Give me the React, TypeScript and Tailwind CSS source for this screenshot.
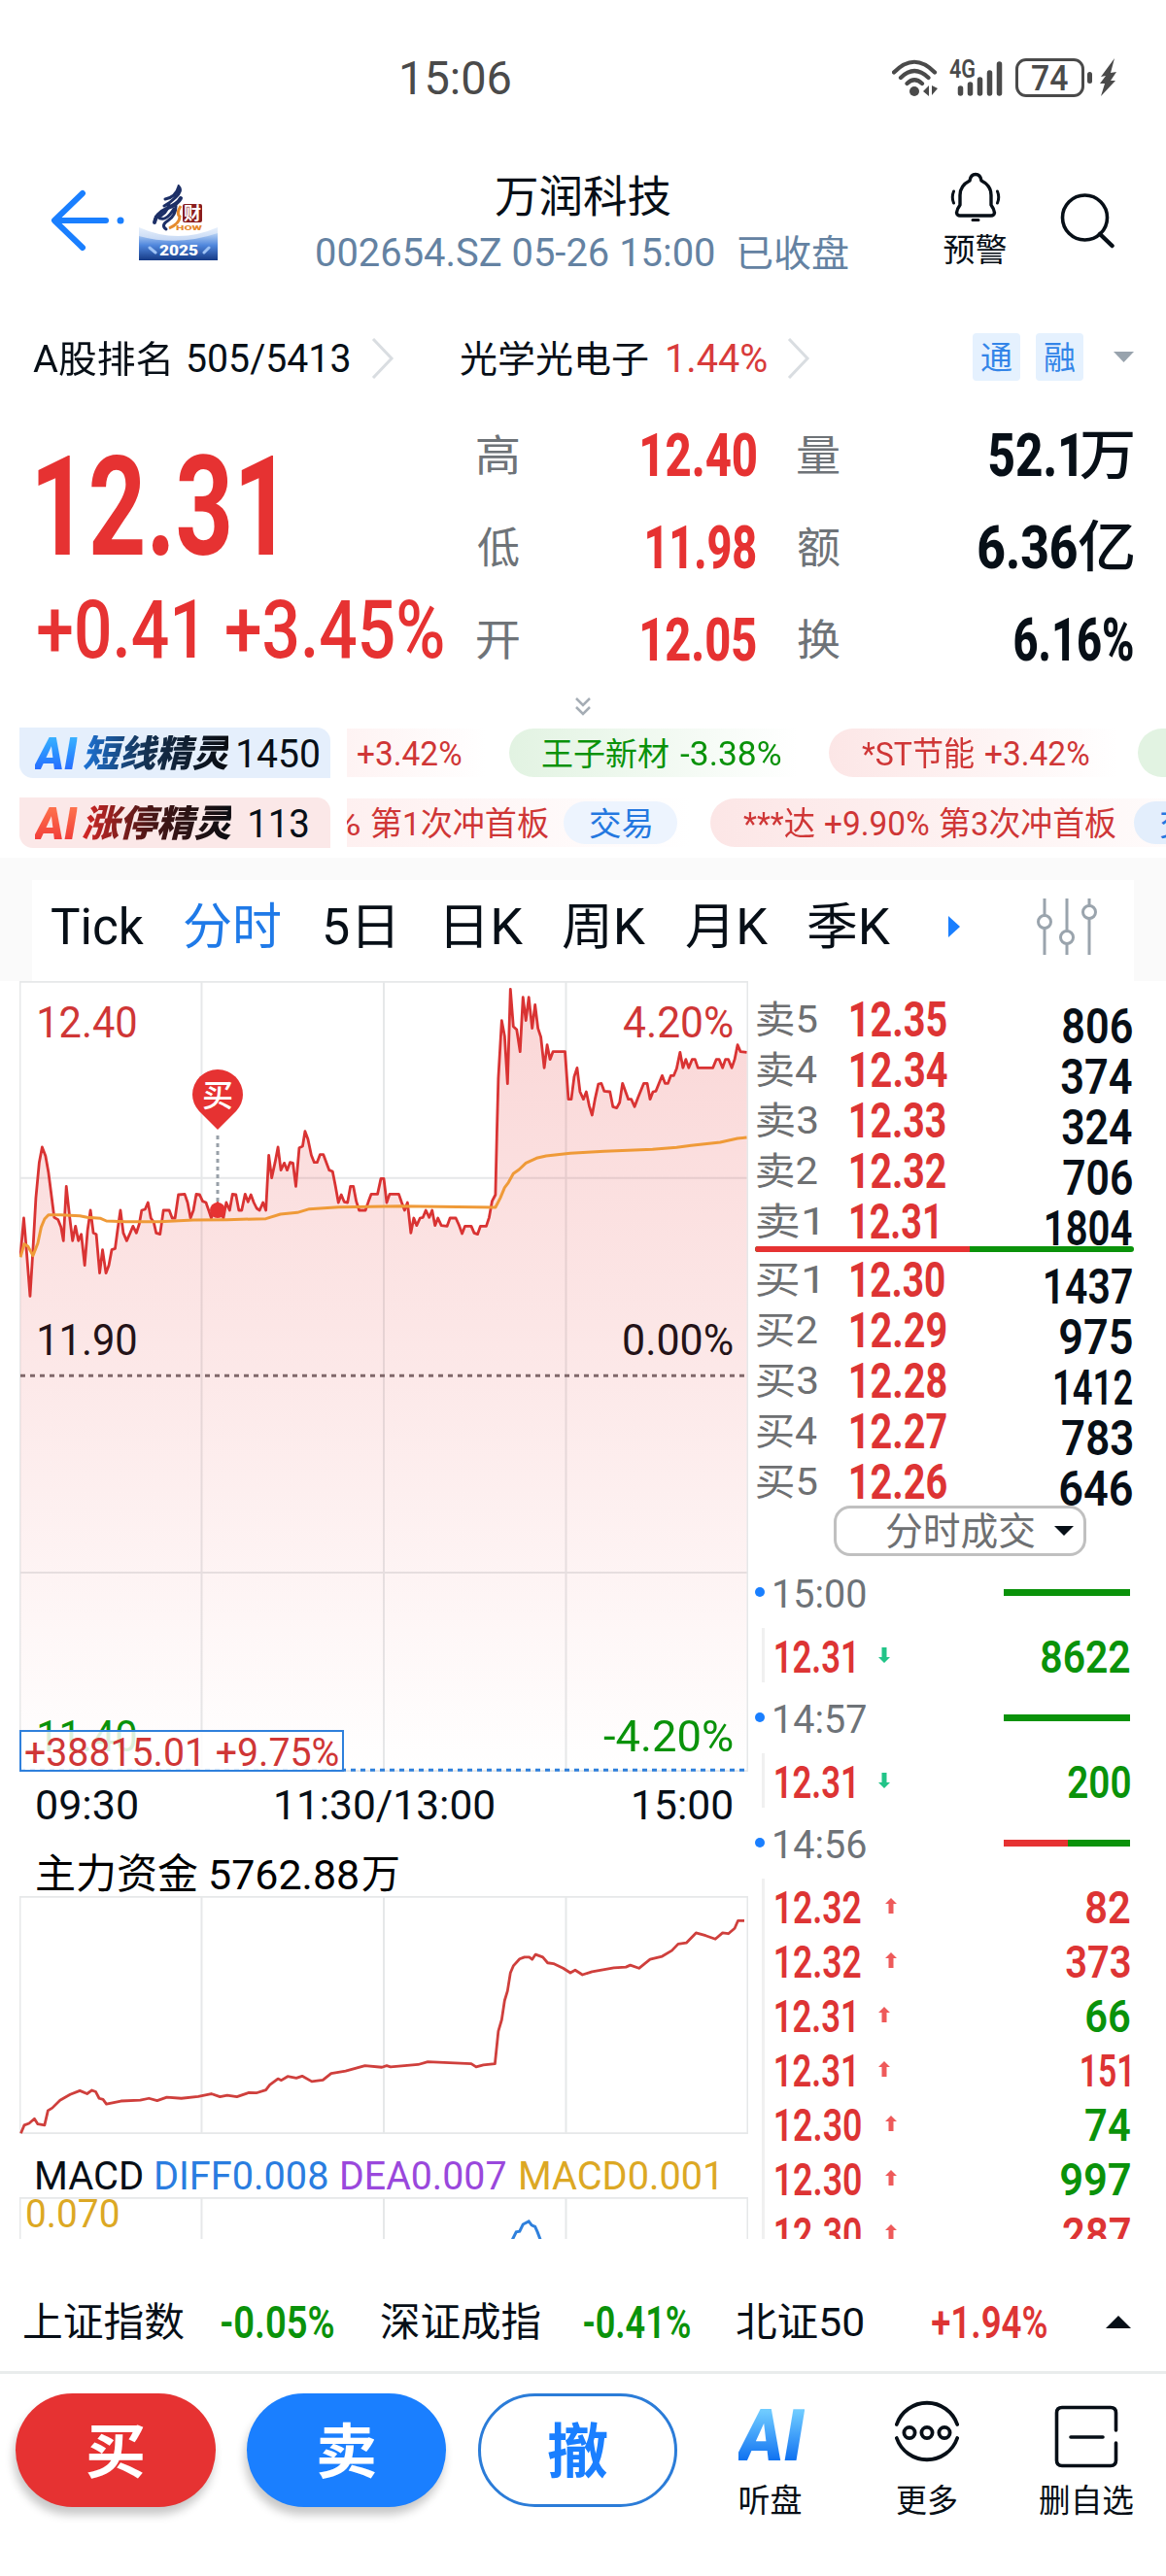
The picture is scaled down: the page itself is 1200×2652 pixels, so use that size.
import { useLayoutEffect, useRef, type ReactNode } from 'react';
import { clsx } from 'clsx';

interface FitProps {
  children: string;
  className?: string;
  inner?: string;
}

// Squeezes or stretches one line of text so its ink fills the width given in className.
function Fit({ children, className, inner }: FitProps) {
  const box = useRef<HTMLSpanElement>(null);
  const text = useRef<HTMLSpanElement>(null);

  useLayoutEffect(() => {
    if (!box.current || !text.current) return;
    const ctx = document.createElement('canvas').getContext('2d');
    if (!ctx) return;
    const cs = getComputedStyle(text.current);
    ctx.font = `${cs.fontStyle} ${cs.fontWeight} ${cs.fontSize} ${cs.fontFamily}`;
    const m = ctx.measureText(children);
    const ink = m.actualBoundingBoxLeft + m.actualBoundingBoxRight;
    const s = box.current.clientWidth / ink;
    text.current.style.transform = `scaleX(${s}) translateX(${m.actualBoundingBoxLeft}px)`;
  }, [children]);

  return (
    <span ref={box} className={clsx('block shrink-0 translate-y-px whitespace-pre leading-none', className)}>
      <span ref={text} className={clsx('inline-block origin-left', inner)}>
        {children}
      </span>
    </span>
  );
}

const PRICE =
  '42,880 49,762 54,850 62,1003 68,860 74,700 81,590 87,543 94,570 100,620 106,690 112,760 120,767 126,790 131,832 137,664 144,760 150,832 156,787 162,832 168,812 175,908 181,800 187,738 193,808 199,812 206,932 212,860 219,932 225,908 231,860 238,856 243,800 249,738 255,808 262,832 268,812 275,787 282,808 288,780 293,738 300,735 306,714 312,762 318,775 323,808 331,812 338,738 350,738 356,762 362,762 369,690 382,688 388,714 394,762 400,738 406,688 413,690 419,710 426,714 432,740 437,762 450,715 462,762 468,714 475,738 481,688 488,690 494,738 500,738 507,688 513,712 519,690 525,714 531,732 537,738 544,714 550,738 556,568 562,638 569,590 575,543 581,614 588,592 594,614 600,590 606,592 612,664 619,545 626,540 631,494 637,518 644,568 650,590 656,590 662,566 669,566 675,590 681,614 688,618 694,664 700,714 706,690 712,712 719,714 725,664 731,664 737,710 743,738 756,738 762,712 768,688 781,688 788,640 794,640 800,714 806,688 825,688 831,714 837,738 843,714 850,808 856,762 862,785 869,762 875,760 881,738 888,760 894,738 900,785 906,762 913,785 925,787 931,762 943,762 950,785 956,810 962,787 975,787 981,808 988,812 994,787 1006,787 1012,760 1018,710 1025,690 1028,500 1031,330 1038,152 1044,200 1050,347 1056,55 1062,170 1069,180 1076,248 1082,80 1088,152 1094,80 1101,176 1107,103 1113,176 1119,203 1126,298 1132,227 1138,272 1144,248 1169,248 1176,395 1182,395 1188,325 1194,298 1200,372 1207,395 1213,372 1219,415 1225,444 1231,395 1238,348 1244,346 1250,370 1262,372 1268,418 1276,422 1282,405 1288,346 1300,395 1306,395 1313,418 1320,390 1332,346 1339,346 1345,395 1351,372 1357,370 1370,322 1376,346 1382,346 1388,322 1394,322 1400,300 1407,250 1413,298 1419,272 1425,298 1432,272 1438,272 1444,298 1475,298 1482,272 1488,272 1495,298 1501,272 1507,272 1514,298 1520,272 1526,227 1532,248 1545,250';

const AVG =
  '42,883 50,842 58,850 68,878 78,840 85,790 92,765 100,752 125,752 165,755 180,760 208,763 220,771 260,773 330,773 400,768 470,767 550,764 580,750 615,745 640,734 700,728 830,725 1025,729 1035,700 1044,668 1052,652 1062,625 1074,612 1088,592 1110,577 1130,570 1180,562 1250,556 1350,550 1400,544 1430,538 1490,528 1526,516 1545,513';

const FLOW =
  '43,1256 50,1235 60,1230 71,1218 78,1232 92,1235 99,1197 108,1190 124,1170 145,1155 165,1145 180,1153 190,1144 198,1148 205,1165 213,1168 220,1180 250,1172 290,1170 308,1165 325,1171 345,1162 375,1165 410,1160 437,1153 455,1161 470,1157 490,1161 515,1150 530,1151 550,1143 558,1130 575,1114 582,1118 595,1108 613,1112 625,1107 645,1121 668,1117 685,1100 715,1094 755,1080 790,1084 800,1080 808,1083 865,1077 885,1070 975,1075 985,1083 1000,1078 1024,1075 1031,990 1038,960 1044,910 1050,885 1056,838 1062,820 1075,802 1085,797 1095,797 1101,803 1108,790 1123,797 1133,812 1145,814 1165,826 1180,838 1190,831 1205,843 1225,835 1270,825 1295,823 1304,818 1322,826 1345,803 1370,795 1390,780 1403,763 1420,760 1440,734 1460,741 1480,750 1495,734 1507,736 1520,722 1527,702 1540,702';

const SELLS = [
  { label: '卖5', price: '12.35', pw: 'w-[98px]', vol: '806', vw: 'w-[71px]' },
  { label: '卖4', price: '12.34', pw: 'w-[99px]', vol: '374', vw: 'w-[73px]' },
  { label: '卖3', price: '12.33', pw: 'w-[97px]', vol: '324', vw: 'w-[72px]' },
  { label: '卖2', price: '12.32', pw: 'w-[97px]', vol: '706', vw: 'w-[71px]' },
  { label: '卖1', price: '12.31', pw: 'w-[88px]', vol: '1804', vw: 'w-[88px]' },
];

const BUYS = [
  { label: '买1', price: '12.30', pw: 'w-[96px]', vol: '1437', vw: 'w-[89px]' },
  { label: '买2', price: '12.29', pw: 'w-[98px]', vol: '975', vw: 'w-[74px]' },
  { label: '买3', price: '12.28', pw: 'w-[98px]', vol: '1412', vw: 'w-[79px]' },
  { label: '买4', price: '12.27', pw: 'w-[98px]', vol: '783', vw: 'w-[72px]' },
  { label: '买5', price: '12.26', pw: 'w-[98px]', vol: '646', vw: 'w-[74px]' },
];

const TRADES = [
  { time: '15:00', red: 'w-0', rows: [{ price: '12.31', up: false, vol: '8622', vw: 'w-[91px]', buy: false }] },
  { time: '14:57', red: 'w-0', rows: [{ price: '12.31', up: false, vol: '200', vw: 'w-[64px]', buy: false }] },
  {
    time: '14:56',
    red: 'w-[66px]',
    rows: [
      { price: '12.32', up: true, vol: '82', vw: 'w-[45px]', buy: true },
      { price: '12.32', up: true, vol: '373', vw: 'w-[66px]', buy: true },
      { price: '12.31', up: true, vol: '66', vw: 'w-[45px]', buy: false },
      { price: '12.31', up: true, vol: '151', vw: 'w-[50px]', buy: true },
      { price: '12.30', up: true, vol: '74', vw: 'w-[46px]', buy: false },
      { price: '12.30', up: true, vol: '997', vw: 'w-[71px]', buy: false },
      { price: '12.30', up: true, vol: '287', vw: 'w-[69px]', buy: true },
    ],
  },
];

function StatusBar() {
  return (
    <div className="flex h-[160px] items-center text-[#4a4a4a]">
      <Fit className="ml-[414px] w-[111px] text-[48px]">15:06</Fit>
      <svg className="ml-[393px] h-[40px] w-[47px]" viewBox="0 0 47 40" fill="none" stroke="#4a4a4a" strokeWidth="4.2" strokeLinecap="round">
        <path d="M2 14.500Q23 -7 44 14.500M9 20Q23 6 37.500 20M15.500 26Q23 18.500 31 26" />
        <circle cx="23" cy="34" r="5" fill="#4a4a4a" stroke="none" />
        <path d="M38 28v11l-6-5zM41 28v10l6-7z" fill="#4a4a4a" stroke="none" />
      </svg>
      <svg className="ml-[12px] h-[40px] w-[56px]" viewBox="0 0 56 40" fill="none" stroke="#4a4a4a" strokeWidth="5.500" strokeLinecap="round">
        <path d="M11.500 36v-5M21.500 36v-9M31.500 36v-14M41.500 36v-21M51.500 36v-30" />
        <text x="0" y="19.500" fill="#4a4a4a" stroke="none" fontSize="25" fontWeight="600" textLength="27" lengthAdjust="spacingAndGlyphs">4G</text>
      </svg>
      <div className="ml-[12px] flex h-[40px] w-[71px] items-center justify-center rounded-[11px] border-[3px] border-[#4a4a4a]">
        <Fit className="w-[37px] text-[36px] font-medium">74</Fit>
      </div>
      <div className="ml-[3px] h-[12px] w-[5px] rounded-full bg-[#4a4a4a]" />
      <svg className="ml-[8px] h-[40px] w-[17px]" viewBox="0 0 17 40">
        <path d="M15 0L1 19L6 18L0 26L5 26L1 39L16 23L11 23L17 14L11 15Z" fill="#4a4a4a" />
      </svg>
    </div>
  );
}

function Logo() {
  return (
    <svg className="h-[78px] w-[81px]" viewBox="0 0 81 78">
      <defs>
        <linearGradient id="sea" x1="0" y1="0" x2="0" y2="1">
          <stop offset="0" stopColor="#b8d3f5" />
          <stop offset="0.450" stopColor="#4f86dc" />
          <stop offset="1" stopColor="#153a86" />
        </linearGradient>
      </defs>
      <path d="M0 44Q40 62 81 44V78H0Z" fill="url(#sea)" opacity="0.350" />
      <path d="M0 53Q40 64 81 50V78H0Z" fill="url(#sea)" />
      <g fill="none" stroke="#1c2f66" strokeWidth="3" strokeLinecap="round">
        <path d="M27 15Q38 13 41 2Q45 6 38 13Q33 18 26 22" />
        <path d="M43 14Q40 20 30 24Q17 30 16 39" strokeWidth="4" />
        <path d="M31 20Q28 32 19 33Q27 40 36 25M38 22Q38 32 30 37Q22 42 28 46" />
      </g>
      <path d="M43 22Q38 30 42 33Q42 40 31 45" fill="none" stroke="#e58a2e" strokeWidth="3" />
      <rect x="45" y="20" width="20" height="19" rx="2" fill="#8a1d1d" />
      <text x="46" y="36" fontSize="18" fontWeight="700" fill="#fff">财</text>
      <text x="38" y="47" fontSize="8" fontWeight="900" fill="#e58a2e" textLength="27" lengthAdjust="spacingAndGlyphs">HOW</text>
      <text x="21" y="73" fontSize="15" fontWeight="900" fill="#fff" textLength="40" lengthAdjust="spacingAndGlyphs">2025</text>
      <path d="M11 65l6 5M67 70l5-5" stroke="#9fc3f5" strokeWidth="3" strokeLinecap="round" />
    </svg>
  );
}

function Header() {
  return (
    <div className="flex h-[170px] items-start">
      <svg className="ml-[50px] mt-[34px] h-[66px] w-[80px]" viewBox="0 0 80 66" fill="none" stroke="#1a7fff" strokeWidth="6" strokeLinecap="round" strokeLinejoin="round">
        <path d="M35 5L6 33L35 61M7 33H59" />
        <circle cx="74" cy="33" r="3.500" fill="#1a7fff" stroke="none" />
      </svg>
      <div className="ml-[13px] mt-[30px]">
        <Logo />
      </div>
      <div className="ml-[102px] w-[548px]">
        <Fit className="ml-[184px] mt-[20px] w-[180px] text-[45px] text-[#070f17]">万润科技</Fit>
        <div className="mt-[15px] flex items-center text-[#6482a2]">
          <Fit className="w-[409px] text-[40px]">002654.SZ 05-26 15:00</Fit>
          <Fit className="ml-[25px] w-[113px] text-[38px]">已收盘</Fit>
        </div>
      </div>
      <div className="ml-[97px] mt-[17px] flex w-[65px] flex-col items-center">
        <svg className="h-[52px] w-[52px]" viewBox="0 0 52 52" fill="none" stroke="#070f17" strokeWidth="3.400" strokeLinecap="round" strokeLinejoin="round">
          <path d="M20 9Q21 2.500 26 2.500T32 9Q42 14 42 24V34Q45 38 45.500 42Q45 45 42 45H10Q7 45 6.500 42Q7 38 10 34V24Q10 14 20 9Z" />
          <path d="M23 49.500h6M3.500 20Q1 26 3.500 32M48.500 20Q51 26 48.500 32" strokeWidth="3" />
        </svg>
        <Fit className="mt-[11px] w-[64px] text-[33px] text-[#070f17]">预警</Fit>
      </div>
      <svg className="ml-[55px] mt-[39px] h-[58px] w-[58px]" viewBox="0 0 58 58" fill="none" stroke="#070f17" strokeWidth="3.600" strokeLinecap="round">
        <circle cx="25.500" cy="25" r="23" />
        <path d="M41 42L53.500 54" strokeWidth="4.500" />
      </svg>
    </div>
  );
}

function Chevron({ className }: { className?: string }) {
  return (
    <svg className={clsx('h-[42px] w-[24px]', className)} viewBox="0 0 24 42" fill="none" stroke="#d9dde1" strokeWidth="3">
      <path d="M2 1L21 21L2 41" />
    </svg>
  );
}

function RankRow() {
  return (
    <div className="flex h-[78px] items-center text-[#070f17]">
      <Fit className="ml-[34px] w-[140px] text-[38px]">A股排名</Fit>
      <Fit className="ml-[20px] w-[165px] text-[40px]">505/5413</Fit>
      <Chevron className="ml-[23px]" />
      <Fit className="ml-[68px] w-[193px] text-[38px]">光学光电子</Fit>
      <Fit className="ml-[20px] w-[102px] text-[40px] text-[#d83b3b]">1.44%</Fit>
      <Chevron className="ml-[21px]" />
      <div className="-mt-[4px] ml-[167px] flex gap-[16px] text-[#3385e8]">
        {['通', '融'].map((t) => (
          <div key={t} className="flex h-[49px] w-[49px] items-center justify-center rounded-[4px] bg-[#e5f1fe]">
            <Fit className="w-[31px] text-[33px]">{t}</Fit>
          </div>
        ))}
      </div>
      <svg className="-mt-[4px] ml-[31px] h-[11px] w-[21px]" viewBox="0 0 21 11">
        <path d="M0 0H21L10.500 11Z" fill="#98a3ad" />
      </svg>
    </div>
  );
}

function Stat({ label, children }: { label: string; children: ReactNode }) {
  return (
    <div className="flex h-[95px] items-center justify-between">
      <Fit className="mt-[3px] w-[43px] text-[44px] font-normal text-[#6e7378]">{label}</Fit>
      {children}
    </div>
  );
}

function Quote() {
  return (
    <div className="flex h-[304px] pt-[12px]">
      <div className="ml-[39px] w-[418px] shrink-0 text-[#e63232]">
        <Fit className="mt-[30px] w-[242px] text-[143px] font-bold">12.31</Fit>
        <Fit className="mt-[13px] w-[417px] text-[84px] font-medium">+0.41 +3.45%</Fit>
      </div>
      <div className="ml-[34px] w-[287px] text-[62px] font-extrabold text-[#e63232]">
        <Stat label="高"><Fit className="w-[117px]">12.40</Fit></Stat>
        <Stat label="低"><Fit className="w-[112px]">11.98</Fit></Stat>
        <Stat label="开"><Fit className="w-[117px]">12.05</Fit></Stat>
      </div>
      <div className="ml-[43px] w-[345px] text-[62px] font-extrabold text-[#070f17]">
        <Stat label="量">
          <div className="flex items-center">
            <Fit className="w-[90px]">52.1</Fit>
            <Fit className="ml-[4px] w-[54px] text-[56px] font-medium">万</Fit>
          </div>
        </Stat>
        <Stat label="额">
          <div className="flex items-center">
            <Fit className="w-[101px]">6.36</Fit>
            <Fit className="ml-[2px] w-[56px] text-[57px] font-medium">亿</Fit>
          </div>
        </Stat>
        <Stat label="换"><Fit className="w-[122px]">6.16%</Fit></Stat>
      </div>
    </div>
  );
}

function Tickers() {
  return (
    <div className="flex h-[141px] flex-col gap-[20px] pt-[7px]">
      <div className="flex h-[52px] items-center overflow-hidden">
        <div className="ml-[20px] flex h-[52px] w-[320px] shrink-0 items-center rounded-bl-[14px] rounded-tr-[14px] bg-[#e5effc]">
          <Fit className="ml-[13px] w-[47px] text-[46px] font-black italic" inner="bg-gradient-to-b from-[#3fbcff] to-[#2a5bff] bg-clip-text text-transparent">AI</Fit>
          <Fit className="ml-[5px] w-[154px] text-[38px] font-black" inner="bg-gradient-to-r from-[#1c74d8] via-[#14304f] via-45% to-[#0a0d12] bg-clip-text italic text-transparent">短线精灵</Fit>
          <Fit className="ml-[6px] w-[83px] text-[41px] text-[#070f17]">1450</Fit>
        </div>
        <div className="ml-[17px] flex h-[50px] shrink-0 items-center text-[#cf3636]">
          <div className="flex h-[50px] w-[143px] items-center bg-gradient-to-r from-[#fef3f3] to-white">
            <Fit className="ml-[11px] w-[107px] text-[35px]">+3.42%</Fit>
          </div>
          <div className="ml-[24px] flex h-[50px] w-[296px] items-center rounded-l-full bg-gradient-to-r from-[#e2f3e2] to-white text-[#0a920a]">
            <Fit className="ml-[34px] w-[130px] text-[33px]">王子新材</Fit>
            <Fit className="ml-[12px] w-[104px] text-[35px]">-3.38%</Fit>
          </div>
          <div className="ml-[33px] flex h-[50px] w-[297px] items-center rounded-l-full bg-gradient-to-r from-[#fce6e6] to-white">
            <Fit className="ml-[34px] w-[115px] text-[34px]">*ST节能</Fit>
            <Fit className="ml-[12px] w-[107px] text-[35px]">+3.42%</Fit>
          </div>
          <div className="ml-[21px] h-[50px] w-[80px] rounded-l-full bg-[#e2f3e2]" />
        </div>
      </div>
      <div className="flex h-[52px] items-center overflow-hidden">
        <div className="ml-[20px] flex h-[52px] w-[320px] shrink-0 items-center rounded-bl-[14px] rounded-tr-[14px] bg-[#fbe8e8]">
          <Fit className="ml-[13px] w-[47px] text-[46px] font-black italic" inner="bg-gradient-to-b from-[#ff7a50] to-[#ef2b35] bg-clip-text text-transparent">AI</Fit>
          <Fit className="ml-[5px] w-[157px] text-[38px] font-black" inner="bg-gradient-to-r from-[#d82626] via-[#4a1515] via-45% to-[#0a0d12] bg-clip-text italic text-transparent">涨停精灵</Fit>
          <Fit className="ml-[15px] w-[60px] text-[41px] text-[#070f17]">113</Fit>
        </div>
        <div className="ml-[17px] flex h-[50px] shrink-0 items-center text-[#cf3636]">
          <div className="flex h-[50px] w-[354px] items-center overflow-hidden bg-gradient-to-r from-[#fef0f0] to-white">
            <Fit className="-ml-[14px] w-[28px] text-[35px]">%</Fit>
            <Fit className="ml-[11px] w-[182px] text-[34px]">第1次冲首板</Fit>
            <div className="ml-[16px] flex h-[44px] w-[117px] shrink-0 items-center justify-center rounded-full bg-[#edf4fe] text-[#2478e0]">
              <Fit className="w-[63px] text-[33px]">交易</Fit>
            </div>
          </div>
          <div className="ml-[20px] flex h-[50px] w-[560px] items-center rounded-l-full bg-gradient-to-r from-[#fce6e6] to-white">
            <Fit className="ml-[34px] w-[73px] text-[34px]">***达</Fit>
            <Fit className="ml-[11px] w-[107px] text-[35px]">+9.90%</Fit>
            <Fit className="ml-[11px] w-[181px] text-[34px]">第3次冲首板</Fit>
            <div className="ml-[19px] flex h-[44px] w-[117px] items-center justify-center rounded-full bg-[#e3eefc] text-[#2478e0]">
              <Fit className="w-[63px] text-[33px]">交易</Fit>
            </div>
          </div>
        </div>
      </div>
    </div>
  );
}

function Tabs() {
  return (
    <div className="h-[127px] bg-[#fafafa] px-[33px] pt-[23px]">
      <div className="flex h-[104px] items-center bg-white pb-[9px] text-[51px] text-[#070f17]">
        <Fit className="ml-[20px] w-[95px]">Tick</Fit>
        <Fit className="ml-[42px] w-[99px] text-[#1f7ae8]">分时</Fit>
        <Fit className="ml-[45px] w-[70px]">5日</Fit>
        <Fit className="ml-[55px] w-[79px]">日K</Fit>
        <Fit className="ml-[41px] w-[85px]">周K</Fit>
        <Fit className="ml-[42px] w-[84px]">月K</Fit>
        <Fit className="ml-[41px] w-[85px]">季K</Fit>
        <svg className="ml-[60px] h-[22px] w-[12px]" viewBox="0 0 12 22">
          <path d="M0 0V22L12 11Z" fill="#1a7fff" />
        </svg>
        <svg className="ml-[78px] h-[60px] w-[64px]" viewBox="0 0 64 60" fill="white" stroke="#9aa4ad" strokeWidth="3">
          <path d="M9 1V59M32 1V59M55 1V59" />
          <circle cx="9" cy="25" r="6.500" />
          <circle cx="32" cy="41" r="6.500" />
          <circle cx="55" cy="15" r="6.500" />
        </svg>
      </div>
    </div>
  );
}

function PriceChart() {
  return (
    <div className="relative h-[814px] w-[750px]">
      <svg className="block h-[814px] w-[750px]" viewBox="40 30 1508 2442" preserveAspectRatio="none" fill="none">
        <defs>
          <linearGradient id="fade" gradientUnits="userSpaceOnUse" x1="0" y1="30" x2="0" y2="2472">
            <stop offset="0" stopColor="#e63232" stopOpacity="0.200" />
            <stop offset="0.500" stopColor="#e63232" stopOpacity="0.110" />
            <stop offset="1" stopColor="#e63232" stopOpacity="0" />
          </linearGradient>
        </defs>
        <g stroke="#e6e8e9" strokeWidth="2">
          <path vectorEffect="non-scaling-stroke" d="M417 30V2472M794 30V2472M1171 30V2472M40 638H1548M40 1857H1548M41 32H1547V2470H41Z" />
        </g>
        <polygon points={`42,2470 ${PRICE} 1545,2470`} fill="url(#fade)" />
        <polyline vectorEffect="non-scaling-stroke" points={PRICE} stroke="#d93333" strokeWidth="2.800" strokeLinejoin="round" />
        <polyline vectorEffect="non-scaling-stroke" points={AVG} stroke="#ef9a38" strokeWidth="3" strokeLinejoin="round" />
        <path vectorEffect="non-scaling-stroke" d="M42 1249H1545" stroke="#80686a" strokeWidth="3" strokeDasharray="5 5" />
        <path vectorEffect="non-scaling-stroke" d="M42 2467H1545" stroke="#2f80dc" strokeWidth="3" strokeDasharray="5 5" />
      </svg>
      <svg className="absolute left-[176px] top-[89px] h-[160px] w-[56px]" viewBox="0 0 56 160">
        <path d="M28 64L9 45Q2 37 2 28A26 26 0 0 1 54 28Q54 37 47 45Z" fill="#e63232" />
        <text x="28" y="40" fontSize="32" fontWeight="500" textAnchor="middle" fill="#fff">买</text>
        <path d="M28 70V140" stroke="#98a0a8" strokeWidth="3" strokeDasharray="4 4" />
        <circle cx="28" cy="147" r="8" fill="#e63232" />
      </svg>
      <Fit className="absolute left-[20px] top-[20px] w-[100px] text-[44px] text-[#cf3636]">12.40</Fit>
      <Fit className="absolute left-[622px] top-[20px] w-[112px] text-[44px] text-[#cf3636]">4.20%</Fit>
      <Fit className="absolute left-[20px] top-[347px] w-[100px] text-[44px] text-[#241318]">11.90</Fit>
      <Fit className="absolute left-[622px] top-[347px] w-[112px] text-[44px] text-[#241318]">0.00%</Fit>
      <Fit className="absolute left-[20px] top-[755px] w-[100px] text-[44px] text-[#0a920a]">11.40</Fit>
      <Fit className="absolute left-[601px] top-[755px] w-[133px] text-[44px] text-[#0a920a]">-4.20%</Fit>
      <div className="absolute left-0 top-[771px] flex h-[43px] w-[334px] items-center border-2 border-[#2f80dc] bg-white/85 pt-[2px]">
        <Fit className="ml-[4px] w-[322px] text-[40px] text-[#cf3636]">+38815.01 +9.75%</Fit>
      </div>
    </div>
  );
}

function Charts() {
  return (
    <div className="ml-[20px] w-[750px] shrink-0 text-[#070f17]">
      <PriceChart />
      <div className="flex h-[66px] items-center pl-[18px]">
        <Fit className="w-[103px] text-[43px]">09:30</Fit>
        <Fit className="ml-[143px] w-[224px] text-[43px]">11:30/13:00</Fit>
        <Fit className="ml-[144px] w-[101px] text-[43px]">15:00</Fit>
      </div>
      <div className="flex h-[62px] items-center pl-[18px] pt-[16px] text-black">
        <Fit className="w-[165px] text-[42px]">主力资金</Fit>
        <Fit className="ml-[14px] w-[151px] text-[43px]">5762.88</Fit>
        <Fit className="ml-[5px] w-[37px] text-[41px]">万</Fit>
      </div>
      <svg className="block h-[245px] w-[750px]" viewBox="40 638 1508 620" preserveAspectRatio="none" fill="none">
        <path vectorEffect="non-scaling-stroke" d="M417 638V1258M794 638V1258M1171 638V1258M41 640H1547V1256H41Z" stroke="#e6e8e9" strokeWidth="2" />
        <polyline vectorEffect="non-scaling-stroke" points={FLOW} stroke="#cf3f3c" strokeWidth="2.800" strokeLinejoin="round" />
      </svg>
      <div className="flex h-[65px] items-center pl-[18px] pt-[21px] text-[40px]">
        <Fit className="w-[108px]">MACD</Fit>
        <Fit className="ml-[15px] w-[176px] text-[#2a7de0]">DIFF0.008</Fit>
        <Fit className="ml-[15px] w-[168px] text-[#9a48dc]">DEA0.007</Fit>
        <Fit className="ml-[16px] w-[202px] text-[#dca824]">MACD0.001</Fit>
      </div>
      <div className="relative h-[43px] overflow-hidden">
        <svg className="block h-[43px] w-[750px]" viewBox="40 1421 1508 109" preserveAspectRatio="none" fill="none">
          <path vectorEffect="non-scaling-stroke" d="M417 1421V1530M794 1421V1530M1171 1421V1530M41 1540V1423H1547V1540" stroke="#e6e8e9" strokeWidth="2" />
          <polyline vectorEffect="non-scaling-stroke" points="1060,1532 1068,1512 1075,1510 1082,1492 1094,1484 1100,1494 1107,1498 1112,1512 1118,1532" stroke="#2f80dc" strokeWidth="3" />
        </svg>
        <Fit className="absolute left-[8px] top-[-3px] w-[94px] text-[40px] text-[#dca824]">0.070</Fit>
      </div>
    </div>
  );
}

function BookRow({ row }: { row: (typeof SELLS)[number] }) {
  return (
    <div className="flex h-[52px] items-center">
      <div className="w-[99px] pl-[2px]">
        <Fit className="w-[62px] text-[39px] text-[#6e7072]">{row.label}</Fit>
      </div>
      <Fit className={clsx('text-[50px] font-bold text-[#dd3434]', row.pw)}>{row.price}</Fit>
      <Fit className={clsx('ml-auto mt-[14px] text-[50px] font-semibold text-[#070f17]', row.vw)}>{row.vol}</Fit>
    </div>
  );
}

function Arrow({ up }: { up: boolean }) {
  return (
    <svg className="h-[16px] w-[12px]" viewBox="0 0 12 16">
      {up ? (
        <path d="M6 0L12 6H8.500V16H3.500V6H0Z" fill="#ee5a5a" />
      ) : (
        <path d="M6 16L12 10H8.500V0H3.500V10H0Z" fill="#22c488" />
      )}
    </svg>
  );
}

function OrderBook() {
  return (
    <div className="ml-[7px] w-[390px] shrink-0">
      <div className="h-[273px] pr-[2px] pt-[13px]">
        {SELLS.map((r) => (
          <BookRow key={r.label} row={r} />
        ))}
      </div>
      <div className="flex h-[6px] overflow-hidden rounded-full bg-[#0a920a]">
        <div className="w-[221px] bg-[#e63232]" />
      </div>
      <div className="pr-[2px] pt-[2px]">
        {BUYS.map((r) => (
          <BookRow key={r.label} row={r} />
        ))}
      </div>
      <div className="-mt-px ml-[81px] flex h-[52px] w-[260px] items-center rounded-[17px] border-[3px] border-[#c0c0c0]">
        <Fit className="ml-[51px] w-[153px] text-[39px] text-[#6e7072]">分时成交</Fit>
        <svg className="ml-[20px] h-[10px] w-[20px]" viewBox="0 0 20 10">
          <path d="M0 0H20L10 10Z" fill="#070f17" />
        </svg>
      </div>
      <div className="pt-px">
        {TRADES.map((g) => (
          <div key={g.time}>
            <div className="flex h-[73px] items-center">
              <div className="-mt-[2px] h-[10px] w-[10px] rounded-full bg-[#1a7fff]" />
              <Fit className="ml-[10px] mt-[2px] w-[94px] text-[40px] text-[#6e7378]">{g.time}</Fit>
              <div className="ml-[142px] flex h-[7px] w-[130px] bg-[#0a920a]">
                <div className={clsx('bg-[#e63232]', g.red)} />
              </div>
            </div>
            <div className="ml-[7px] border-l-[3px] border-[#f0f0f0] pl-[11px] pr-[4px]">
              {g.rows.map((r, i) => {
                const short = r.price.endsWith('1');
                return (
                  <div key={i} className="flex h-[56px] items-center">
                    <Fit className={clsx('mr-[25px] text-[47px] font-semibold text-[#dd3434]', short ? 'w-[81px]' : 'w-[88px]')}>
                      {r.price}
                    </Fit>
                    <Arrow up={r.up} />
                    <Fit className={clsx('ml-auto text-[47px] font-semibold', r.vw, r.buy ? 'text-[#dd3434]' : 'text-[#0a920a]')}>
                      {r.vol}
                    </Fit>
                  </div>
                );
              })}
            </div>
          </div>
        ))}
      </div>
    </div>
  );
}

function IndexBar() {
  return (
    <div className="flex h-[139px] items-center border-b-[3px] border-[#e9ecec] pt-[34px] text-[46px] font-semibold text-[#070f17]">
      <Fit className="ml-[25px] w-[164px] text-[41px] font-normal">上证指数</Fit>
      <Fit className="ml-[39px] w-[115px] text-[#0a920a]">-0.05%</Fit>
      <Fit className="ml-[49px] w-[164px] text-[41px] font-normal">深证成指</Fit>
      <Fit className="ml-[45px] w-[109px] text-[#0a920a]">-0.41%</Fit>
      <Fit className="ml-[48px] w-[130px] text-[41px] font-normal">北证50</Fit>
      <Fit className="ml-[71px] w-[118px] text-[#dd3434]">+1.94%</Fit>
      <svg className="ml-[61px] h-[13px] w-[26px]" viewBox="0 0 26 13">
        <path d="M0 13H26L13 0Z" fill="#070f17" />
      </svg>
    </div>
  );
}

function ActionBar() {
  return (
    <div className="flex h-[208px] items-start pt-[20px] text-[#070f17]">
      <button className="ml-[16px] flex h-[117px] w-[206px] items-center justify-center rounded-full bg-[#e63232] pt-[3px] text-white shadow-[-2px_8px_10px_rgba(0,0,0,0.22)]">
        <Fit className="w-[58px] text-[61px] font-bold">买</Fit>
      </button>
      <button className="ml-[32px] flex h-[117px] w-[205px] items-center justify-center rounded-full bg-[#1a7fff] pt-[3px] text-white shadow-[-2px_8px_10px_rgba(0,0,0,0.22)]">
        <Fit className="w-[58px] text-[61px] font-bold">卖</Fit>
      </button>
      <button className="ml-[33px] flex h-[117px] w-[205px] items-center justify-center rounded-full border-[3px] border-[#2b7cd8] bg-white pt-[3px] text-[#1a7fff]">
        <Fit className="w-[61px] text-[61px] font-bold">撤</Fit>
      </button>
      <div className="ml-[57px] flex w-[76px] flex-col items-center">
        <Fit className="mt-[6px] w-[74px] text-[74px] font-black italic" inner="bg-gradient-to-b from-[#6fcbff] from-15% to-[#0a6ff0] to-85% bg-clip-text text-transparent">AI</Fit>
        <Fit className="ml-[2px] mt-[13px] w-[63px] text-[33px]">听盘</Fit>
      </div>
      <div className="ml-[89px] flex w-[70px] flex-col items-center">
        <svg className="mt-[3px] h-[72px] w-[70px]" viewBox="0 0 70 72" fill="none" stroke="#070f17" strokeWidth="3.800" strokeLinecap="round">
          <path d="M3.800 29A33 33 0 0 1 66.200 29M3.800 43A33 33 0 0 0 66.200 43" />
          <circle cx="17" cy="37.500" r="5.600" />
          <circle cx="35" cy="37.500" r="5.600" />
          <circle cx="53" cy="37.500" r="5.600" />
        </svg>
        <Fit className="mt-[18px] w-[62px] text-[33px]">更多</Fit>
      </div>
      <div className="ml-[80px] flex w-[98px] flex-col items-center">
        <svg className="mt-[12px] h-[65px] w-[66px]" viewBox="0 0 66 65" fill="none" stroke="#070f17" strokeWidth="3.600" strokeLinecap="round">
          <path d="M63.500 26V8Q63.500 2.500 58 2.500H8Q2.500 2.500 2.500 8V57Q2.500 62.500 8 62.500H58Q63.500 62.500 63.500 57V39M17 33H50" />
        </svg>
        <Fit className="mt-[16px] w-[96px] text-[33px]">删自选</Fit>
      </div>
    </div>
  );
}

export default function App() {
  return (
    <div className="h-[2652px] w-[1200px] overflow-hidden bg-white font-[Roboto,'Noto_Sans_CJK_SC',sans-serif]">
      <StatusBar />
      <Header />
      <RankRow />
      <Quote />
      <div className="flex h-[30px] justify-center pt-[5px]">
        <svg className="h-[21px] w-[16px]" viewBox="0 0 16 21" fill="none" stroke="#a5adb5" strokeWidth="2.500">
          <path d="M1 2L8 9L15 2M1 11L8 18L15 11" />
        </svg>
      </div>
      <Tickers />
      <Tabs />
      <div className="flex h-[1295px] overflow-hidden">
        <Charts />
        <OrderBook />
      </div>
      <IndexBar />
      <ActionBar />
    </div>
  );
}
